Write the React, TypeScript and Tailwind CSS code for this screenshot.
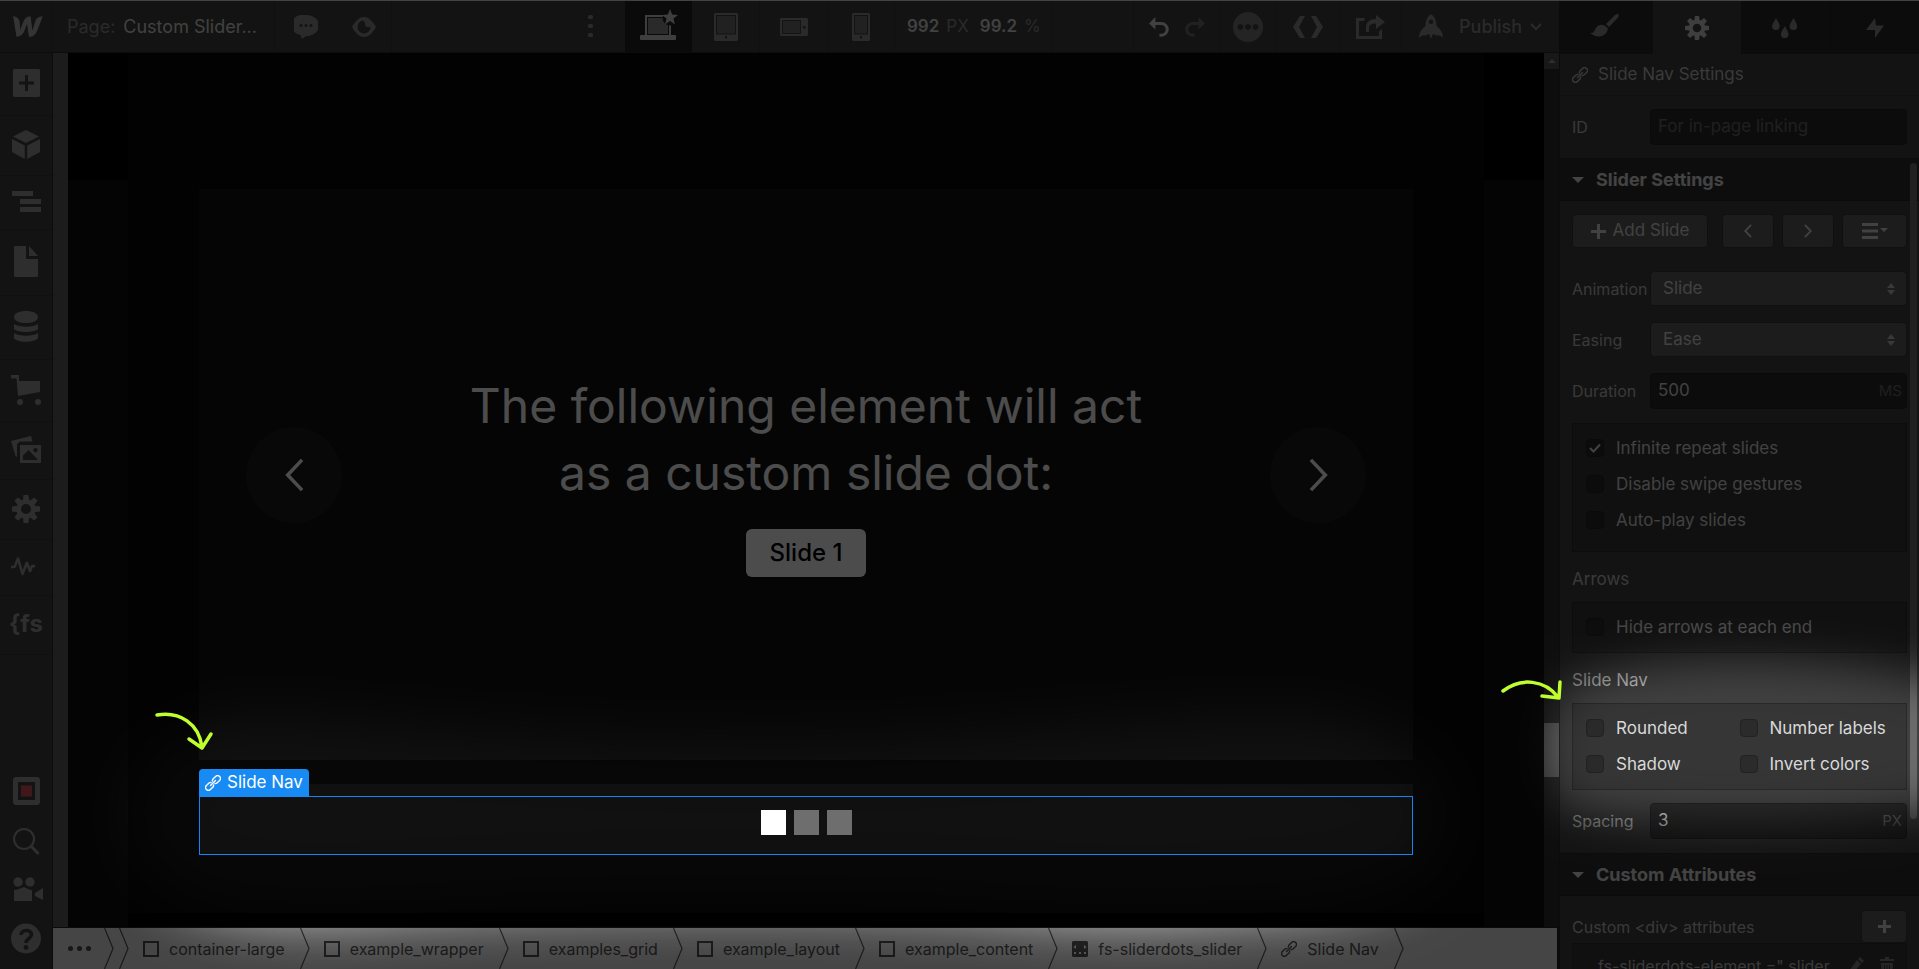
import { useState } from "react";
import type { InputHTMLAttributes, ReactNode } from "react";

const ANIMATIONS = ["Slide", "Cross Fade", "Fade Out/In", "Slide Out/In"];
const EASINGS = ["Ease", "Linear", "Ease In", "Ease Out"];

const BREADCRUMBS = [
  { label: "container-large", icon: "box" },
  { label: "example_wrapper", icon: "box" },
  { label: "examples_grid", icon: "box" },
  { label: "example_layout", icon: "box" },
  { label: "example_content", icon: "box" },
  { label: "fs-sliderdots_slider", icon: "slider" },
  { label: "Slide Nav", icon: "link" },
];

/* ---------- icons ---------- */

interface IconProps {
  w: number;
  h: number;
  box?: string;
  className?: string;
  children: ReactNode;
}

function Icon({ w, h, box, className = "", children }: IconProps) {
  return (
    <svg
      width={w}
      height={h}
      viewBox={box ?? `0 0 ${w} ${h}`}
      fill="currentColor"
      aria-hidden="true"
      className={`shrink-0 ${className}`}
    >
      {children}
    </svg>
  );
}

function GearIcon({ size }: { size: number }) {
  return (
    <Icon w={size} h={size} box="0 0 28 28">
      {[0, 45, 90, 135].map((deg) => (
        <path key={deg} d="M11.6 0h4.800l.800 6v16l-.800 6h-4.800l-.800-6V6z" transform={`rotate(${deg} 14 14)`} />
      ))}
      <circle cx="14" cy="14" r="7.3" fill="none" stroke="currentColor" strokeWidth="4.6" />
      <circle cx="14" cy="14" r="5" className="fill-[#404040]" />
    </Icon>
  );
}

function LinkIcon({ size = 16 }: { size?: number }) {
  return (
    <Icon w={size} h={size} box="0 0 16 16">
      <g fill="none" stroke="currentColor" strokeWidth="1.4" strokeLinecap="round" transform="rotate(-45 8 8)">
        <path d="M7 9.800A2.800 2.800 0 0 1 5.500 10.800H1.500a2.800 2.800 0 0 1 0-5.600h4A2.800 2.800 0 0 1 7 6.200" />
        <path d="M9 6.200a2.800 2.800 0 0 1 1.500-1h4a2.800 2.800 0 0 1 0 5.600h-4A2.800 2.800 0 0 1 9 9.800" />
        <path d="M4.500 8h7" />
      </g>
    </Icon>
  );
}

function ChevronIcon({ dir, w, h, stroke }: { dir: "left" | "right"; w: number; h: number; stroke: number }) {
  return (
    <Icon w={w} h={h} box="0 0 10 18">
      <path
        d={dir === "left" ? "M9 1L1.4 9 9 17" : "M1 1l7.6 8L1 17"}
        fill="none"
        stroke="currentColor"
        strokeWidth={stroke}
      />
    </Icon>
  );
}

function UndoIcon({ flip = false }: { flip?: boolean }) {
  return (
    <Icon w={20} h={20}>
      <g transform={flip ? "matrix(-1 0 0 1 20 0)" : undefined}>
        <path d="M0 6.6L6.4 0v12.6z" />
        <path d="M5 6.6h7.4a5.6 5.6 0 0 1 0 11.6h-2" fill="none" stroke="currentColor" strokeWidth="3" />
      </g>
    </Icon>
  );
}

const SIDEBAR = [
  {
    name: "Add elements",
    height: "h-[63px]",
    icon: (
      <Icon w={27} h={28}>
        <path fillRule="evenodd" d="M1 0h25l1 1v26l-1 1H1l-1-1V1zM12 6v6.500H6v3h6V22h3v-6.500h6v-3h-6V6z" />
      </Icon>
    ),
  },
  {
    name: "Symbols",
    height: "h-[60px]",
    icon: (
      <Icon w={28} h={29}>
        <path d="M14 0l13 6.500L14 13 1 6.500zM0 9l12.800 6.500V29L0 22zM28 9l-12.800 6.500V29L28 22z" />
      </Icon>
    ),
  },
  {
    name: "Navigator",
    height: "h-[54px]",
    icon: (
      <Icon w={29} h={21}>
        <path d="M0 0h21v5H0zM8 8h21v5H8zM8 16h21v5H8z" />
      </Icon>
    ),
  },
  {
    name: "Pages",
    height: "h-[66px]",
    icon: (
      <Icon w={24} h={31}>
        <path d="M0 1l1-1h11v13h12v17l-1 1H1l-1-1zM15 0l9 10h-9z" />
      </Icon>
    ),
  },
  {
    name: "CMS collections",
    height: "h-[64px]",
    icon: (
      <Icon w={24} h={31}>
        <path d="M0 6c0-8 24-8 24 0s-24 8-24 0zM0 13c5 3.500 19 3.500 24 0v5c-3 4-21 4-24 0zM0 22c5 3.500 19 3.500 24 0v5c-3 5-21 5-24 0z" />
      </Icon>
    ),
  },
  {
    name: "Ecommerce",
    height: "h-[62px]",
    icon: (
      <Icon w={30} h={30}>
        <path d="M0 0h8v6h21v11L7 21 5.500 3.500H0z" />
        <circle cx="9" cy="27" r="3" />
        <circle cx="27" cy="27" r="3" />
      </Icon>
    ),
  },
  {
    name: "Assets",
    height: "h-[58px]",
    icon: (
      <Icon w={30} h={27}>
        <path d="M0 5L20 0l1.500 5.500H9L6 8v13L4.500 20z" />
        <path fillRule="evenodd" d="M9 9h21v18H9zM12 24h15l-9.500-10L12 19.500zM24.500 12a2.200 2.200 0 1 0 .01 0z" />
      </Icon>
    ),
  },
  { name: "Settings", height: "h-[60px]", icon: <GearIcon size={28} /> },
  {
    name: "Audit",
    height: "h-[56px]",
    icon: (
      <Icon w={24} h={20} className="mr-1.5">
        <path
          d="M0 10h3.500L7 1.500 11.500 17l4.300-11 3.200 8 2-5h3"
          fill="none"
          stroke="currentColor"
          strokeWidth="2.600"
          strokeLinejoin="round"
        />
      </Icon>
    ),
  },
  { name: "Finsweet extension", height: "h-[59px]", icon: <span className="text-[24px] leading-6 font-bold">{"{fs"}</span> },
];

/* ---------- top bar ---------- */

function TopButton({ name, className, children }: { name: string; className: string; children: ReactNode }) {
  return (
    <button type="button" aria-label={name} className={`flex h-full items-center justify-center ${className}`}>
      {children}
    </button>
  );
}

function TopBar() {
  return (
    <header className="flex h-[52px] shrink-0 items-center border-b border-[#2b2b2b] bg-[#404040] text-[#8c8c8c]">
      <TopButton name="Webflow menu" className="w-[53px] border-r border-[#363636] pl-1 text-[#b0b0b0]">
        <Icon w={30} h={21} box="3.9 6.3 18.2 12.8">
          <path d="M17.8 8.560s-1.950 6.100-2.100 6.600c-.060-.500-1.120-8.770-1.120-8.770-2.450 0-3.760 1.750-4.460 3.590 0 0-1.770 4.570-1.910 4.960-.010-.360-.280-4.920-.280-4.920-.150-2.320-2.280-3.630-4.010-3.630l2.070 12.590c2.640-.010 4.070-1.790 4.810-3.640 0 0 1.580-4.100 1.650-4.280.010.170 1.140 7.920 1.140 7.920 2.650 0 4.080-1.670 4.850-3.450l3.590-9.140c-2.630 0-4.010 1.790-4.230 2.170z" />
        </Icon>
      </TopButton>
      <button type="button" className="flex h-full w-[222px] items-center gap-2 border-r border-[#363636] pl-3.5 text-[18px] whitespace-nowrap">
        <span>Page:</span>
        <span className="text-[#d9d9d9]">Custom Slider...</span>
      </button>
      <TopButton name="Comments" className="w-[62px]">
        <Icon w={24} h={24}>
          <path
            fillRule="evenodd"
            d="M12 0a12 9.500 0 0 1 0 21L8 24l-1.500-4A12 10 0 0 1 12 0zM7 9a1.500 1.500 0 1 0 .01 0zM12 9a1.500 1.500 0 1 0 .01 0zM17 9a1.500 1.500 0 1 0 .01 0z"
          />
        </Icon>
      </TopButton>
      <TopButton name="Preview" className="w-[55px] border-r border-[#363636]">
        <Icon w={24} h={20}>
          <path
            fillRule="evenodd"
            d="M0 10c4-7 8-10 12-10s8 3 12 10c-4 7-8 10-12 10S4 17 0 10zM11 3.500a6.500 6.500 0 1 0 7.500 6c-2 1.500-6 .500-5.500-3 0-1.200-.800-2-2-3z"
          />
        </Icon>
      </TopButton>
      <div className="flex-1" />
      <TopButton name="More breakpoints" className="w-[68px]">
        <Icon w={6} h={24}>
          <rect width="5" height="4" rx="1.500" />
          <rect y="9" width="5" height="4" rx="1.500" />
          <rect y="18" width="5" height="4" rx="1.500" />
        </Icon>
      </TopButton>
      <TopButton name="Desktop" className="w-[67px] bg-[#222222] text-[#d0d0d0]">
        <Icon w={38} h={32} className="mb-1">
          <path d="M5 6h18v2H7v18h22V15h2v13H5z" />
          <rect x="8" y="9" width="20" height="16" className="fill-[#8c8c8c]" />
          <rect y="26" width="36" height="5" rx="1" />
          <circle cx="30" cy="9" r="7.500" className="fill-[#222222]" />
          <path d="M30 0l2.100 5.600 5.900.300-4.600 3.700 1.600 5.800-5-3.300-5 3.300 1.600-5.800L22 5.900l5.900-.300z" />
        </Icon>
      </TopButton>
      <TopButton name="Tablet" className="w-[68px] border-r border-[#363636]">
        <Icon w={24} h={28}>
          <path fillRule="evenodd" d="M1 0h22l1 1v26l-1 1H1l-1-1V1zM2 2v19.500h20V2zM11 23v2.500h2V23z" />
          <rect x="3" y="3" width="18" height="17.500" className="fill-[#6e6e6e]" />
        </Icon>
      </TopButton>
      <TopButton name="Mobile landscape" className="w-[68px] border-r border-[#363636]">
        <Icon w={28} h={18}>
          <path fillRule="evenodd" d="M1 0h26l1 1v16l-1 1H1l-1-1V1zM2 2v14h19V2zM23 8v2.500h2.500V8z" />
          <rect x="3" y="3" width="17" height="12" className="fill-[#6e6e6e]" />
        </Icon>
      </TopButton>
      <TopButton name="Mobile portrait" className="w-[67px] border-r border-[#363636]">
        <Icon w={18} h={28}>
          <path fillRule="evenodd" d="M1 0h16l1 1v26l-1 1H1l-1-1V1zM2 2v19.500h14V2zM8 23v2.500h2V23z" />
          <rect x="3" y="3" width="12" height="17.500" className="fill-[#6e6e6e]" />
        </Icon>
      </TopButton>
      <button type="button" className="flex h-full w-[158px] items-center gap-[7px] border-r border-[#363636] pl-3 text-[17px]">
        <span className="font-semibold text-[#d9d9d9]">992</span>
        <span>PX</span>
        <span className="ml-1 font-semibold text-[#d9d9d9]">99.2</span>
        <span>%</span>
      </button>
      <div className="h-full w-[81px] border-r border-[#363636]" />
      <TopButton name="Undo" className="w-[49px] text-[#d9d9d9]">
        <UndoIcon />
      </TopButton>
      <TopButton name="Redo" className="w-[37px] border-r border-[#363636] pr-3 text-[#6e6e6e]">
        <UndoIcon flip />
      </TopButton>
      <TopButton name="Status" className="w-[56px] border-r border-[#363636] text-[#7a7a7a]">
        <Icon w={30} h={30}>
          <path
            fillRule="evenodd"
            d="M15 0a15 15 0 1 0 .01 0zM7.500 12a3 3 0 1 1-.01 0zM15 12a3 3 0 1 1-.01 0zM22.500 12a3 3 0 1 1-.01 0z"
          />
        </Icon>
      </TopButton>
      <TopButton name="Export code" className="w-16 border-r border-[#363636]">
        <Icon w={30} h={22}>
          <path d="M7 0h5L6 11l6 11H7L0 11zM23 0h-5l6 11-6 11h5l7-11z" />
        </Icon>
      </TopButton>
      <TopButton name="Share" className="w-[62px] border-r border-[#363636]">
        <Icon w={29} h={24}>
          <path d="M9 3H0v21h26V14l-3 2.500V21H3V6h5z" />
          <path d="M10 17v-5c0-5 4-8 10-8V0l9 7-9 7V8.500c-5 0-7 1.500-7 4.500v4z" />
        </Icon>
      </TopButton>
      <button type="button" className="flex h-full w-[157px] items-center pl-[17px] text-[18px] font-medium">
        <Icon w={24} h={25}>
          <path
            fillRule="evenodd"
            d="M12 0c4 3 5.500 7 5.500 12 3.500 3 6.500 6 6.500 12-2-2-4-3-6.500-2.500L14 20l-2 5-2-5-3.500 1.500C4 21 2 22 0 24c0-6 3-9 6.500-12C6.500 7 8 3 12 0zM12 5.500a2.300 2.300 0 1 0 .01 0z"
          />
        </Icon>
        <span className="ml-4">Publish</span>
        <Icon w={12} h={8} className="ml-2">
          <path d="M1 1l5 5 5-5" fill="none" stroke="currentColor" strokeWidth="2" />
        </Icon>
      </button>
    </header>
  );
}

/* ---------- left sidebar ---------- */

function Sidebar() {
  return (
    <nav className="flex w-[53px] shrink-0 flex-col border-r border-[#2b2b2b] bg-[#404040] text-[#999999]">
      {SIDEBAR.map((item) => (
        <button
          key={item.name}
          type="button"
          aria-label={item.name}
          className={`flex w-full shrink-0 items-center justify-center border-b border-[#363636] pb-0.5 ${item.height}`}
        >
          {item.icon}
        </button>
      ))}
      <div className="mt-auto flex flex-col items-center gap-[22px] pb-[15px]">
        <button type="button" aria-label="Record">
          <Icon w={27} h={28}>
            <path fillRule="evenodd" d="M2 0h23l2 2v24l-2 2H2l-2-2V2zM5 5v18h17V5z" />
            <rect x="8" y="8.500" width="11" height="11" className="fill-[#d8505f]" />
          </Icon>
        </button>
        <button type="button" aria-label="Search">
          <Icon w={27} h={28}>
            <circle cx="11" cy="12" r="10" fill="none" stroke="currentColor" strokeWidth="2.200" />
            <path d="M18 19l7.500 8" stroke="currentColor" strokeWidth="3" />
          </Icon>
        </button>
        <button type="button" aria-label="Video tutorials" className="pl-1">
          <Icon w={30} h={24}>
            <circle cx="5" cy="5" r="4.700" />
            <circle cx="17" cy="5" r="4.700" />
            <path d="M1 13c4 0 6-2 10-3 3 1 5 3 8 3v11H1zM22 16l8-5v12l-8-4z" />
          </Icon>
        </button>
        <button type="button" aria-label="Help">
          <Icon w={30} h={31}>
            <circle cx="15" cy="15.500" r="15" />
            <path d="M10 12c0-6 10.500-6 10.500-.500 0 4-5.500 4-5.500 8.500" fill="none" stroke="#404040" strokeWidth="3.600" />
            <circle cx="15" cy="24.500" r="2.400" fill="#404040" />
          </Icon>
        </button>
      </div>
    </nav>
  );
}

/* ---------- canvas ---------- */

function SlideArrow({ dir }: { dir: "left" | "right" }) {
  return (
    <button
      type="button"
      aria-label={dir === "left" ? "Previous slide" : "Next slide"}
      className="flex size-24 shrink-0 items-center justify-center rounded-full bg-[#1c1c1c] text-white"
    >
      <ChevronIcon dir={dir} w={19} h={34} stroke={1.900} />
    </button>
  );
}

function Canvas() {
  return (
    <div className="flex min-h-0 flex-1">
      <div className="w-[15px] shrink-0 bg-[#5e5e5e]" />
      <div className="flex min-w-0 flex-1 bg-black">
        <div className="mt-[127px] w-[60px] shrink-0 bg-[#0e0e0e]" />
        <main className="mb-3.5 flex min-w-0 flex-1 flex-col bg-[#080808] px-[71px] pt-[136px] pb-[58px]">
          <section className="flex flex-1 items-center justify-between bg-[#111111] px-[47px] text-white">
            <SlideArrow dir="left" />
            <div className="flex flex-col items-center">
              <h1 className="text-center text-[48px] leading-[67px]">
                The following element will act
                <br />
                as a custom slide dot:
              </h1>
              <span className="mt-[23px] rounded-md bg-white px-6 text-[24px] leading-[48px] font-medium text-black">Slide 1</span>
            </div>
            <SlideArrow dir="right" />
          </section>
          <div className="mt-6 bg-[#111111] pt-3">
            {/* selected element, stays above the dimming layer */}
            <div className="relative z-20 flex h-[59px] items-center justify-center gap-2 border border-[#1485f5] pb-1.5">
              <span className="absolute -top-7 -left-px flex h-7 items-center gap-1.5 rounded-t-sm bg-[#188af3] px-1.5 text-[17px] whitespace-nowrap text-white">
                <LinkIcon />
                Slide Nav
              </span>
              <button type="button" aria-label="Slide 1" className="size-[25px] bg-white" />
              <button type="button" aria-label="Slide 2" className="size-[25px] bg-[#6e6e6e]" />
              <button type="button" aria-label="Slide 3" className="size-[25px] bg-[#6e6e6e]" />
            </div>
          </div>
        </main>
        <div className="mt-[127px] w-[60px] shrink-0 bg-[#0e0e0e]" />
      </div>
      <div className="flex w-[15px] shrink-0 flex-col bg-[#2e2e2e]">
        <div className="flex h-4 items-center justify-center bg-[#525252] text-[#999999]">
          <Icon w={8} h={4}>
            <path d="M4 0l4 4H0z" />
          </Icon>
        </div>
        <div className="mt-[654px] h-[54px] bg-[#666666]" />
      </div>
    </div>
  );
}

function CrumbIcon({ kind }: { kind: string }) {
  if (kind === "link") return <LinkIcon />;
  if (kind === "slider") {
    return (
      <Icon w={16} h={16}>
        <path
          fillRule="evenodd"
          d="M1 0h14l1 1v14l-1 1H1l-1-1V1zM4 4L1.500 6 4 8zM12 4v4l2.500-2zM2 11v2h2v-2zM7 11v2h2v-2zM12 11v2h2v-2z"
        />
      </Icon>
    );
  }
  return <span className="size-4 border-2 border-current" />;
}

function CrumbDivider() {
  return (
    <Icon w={10} h={41}>
      <path d="M.500 0l8.500 20.500L.500 41" fill="none" stroke="#555555" strokeWidth="1.200" />
    </Icon>
  );
}

function Breadcrumbs() {
  return (
    <nav className="mr-0.5 flex h-[42px] shrink-0 items-center overflow-hidden border-t border-[#222222] bg-[#e6e6e6] text-[16px] text-[#4d4d4d]">
      <button type="button" aria-label="Parent elements" className="flex h-full w-[51px] shrink-0 items-center pl-[15px]">
        <Icon w={23} h={5}>
          <circle cx="2.500" cy="2.500" r="2.500" />
          <circle cx="11.500" cy="2.500" r="2.500" />
          <circle cx="20.500" cy="2.500" r="2.500" />
        </Icon>
      </button>
      <CrumbDivider />
      <span className="w-[5px]" />
      <CrumbDivider />
      {BREADCRUMBS.map((crumb) => (
        <div key={crumb.label} className="flex items-center">
          <a href={`#${crumb.label}`} className="flex items-center gap-2.5 pr-[15px] pl-3.5 whitespace-nowrap">
            <CrumbIcon kind={crumb.icon} />
            {crumb.label}
          </a>
          <CrumbDivider />
        </div>
      ))}
    </nav>
  );
}

/* ---------- settings panel ---------- */

function SectionHeader({ title }: { title: string }) {
  return (
    <h2 className="flex h-[43px] shrink-0 items-center gap-3 border-y border-[#262626] bg-[#2e2e2e] pl-3 text-[18px] font-bold text-[#e0e0e0]">
      <Icon w={12} h={6}>
        <path d="M0 0h12L6 6z" />
      </Icon>
      {title}
    </h2>
  );
}

function Row({ id, label, children }: { id: string; label: string; children: ReactNode }) {
  return (
    <div className="flex items-center">
      <label htmlFor={id} className="w-[78px] shrink-0 text-[16px] text-[#bfbfbf]">
        {label}
      </label>
      {children}
    </div>
  );
}

function TextField({ unit, ...props }: InputHTMLAttributes<HTMLInputElement> & { unit?: string }) {
  return (
    <div className="flex h-9 min-w-0 flex-1 items-center rounded border border-[#222222] bg-[#2b2b2b] pr-1 pl-[7px]">
      <input
        {...props}
        className="min-w-0 flex-1 bg-transparent text-[17px] text-[#d9d9d9] outline-none placeholder:text-[#696969]"
      />
      {unit && <span className="text-[15px] text-[#666666]">{unit}</span>}
    </div>
  );
}

function SelectField({ id, options }: { id: string; options: string[] }) {
  return (
    <div className="relative h-[35px] min-w-0 flex-1 text-[#bfbfbf]">
      <select
        id={id}
        className="size-full appearance-none rounded-sm border border-[#363636] bg-[#5e5e5e] pl-3 text-[17px] text-[#d9d9d9] outline-none"
      >
        {options.map((option) => (
          <option key={option}>{option}</option>
        ))}
      </select>
      <Icon w={8} h={12} className="pointer-events-none absolute top-3 right-3">
        <path d="M4 0l4 5H0zM4 12l4-5H0z" />
      </Icon>
    </div>
  );
}

function Check({ label, on = false }: { label: string; on?: boolean }) {
  const [checked, setChecked] = useState(on);
  return (
    <label className="flex h-[18px] items-center gap-3 text-[17px] leading-[18px] whitespace-nowrap text-[#d9d9d9]">
      <span className="relative flex size-[18px] shrink-0">
        <input
          type="checkbox"
          checked={checked}
          onChange={() => setChecked(!checked)}
          className="size-full appearance-none rounded-sm border border-[#222222] bg-[#2b2b2b]"
        />
        {checked && (
          <Icon w={12} h={10} className="pointer-events-none absolute top-1 left-[3px]">
            <path d="M1 5l3.500 3.500L11 1.500" fill="none" stroke="currentColor" strokeWidth="2" />
          </Icon>
        )}
      </span>
      {label}
    </label>
  );
}

function PanelButton({ name, className, children }: { name: string; className: string; children: ReactNode }) {
  return (
    <button
      type="button"
      aria-label={name}
      className={`flex items-center justify-center rounded-sm border border-[#363636] bg-[#5e5e5e] text-[#d9d9d9] ${className}`}
    >
      {children}
    </button>
  );
}

const GROUP = "border border-[#2a2a2a] bg-[#363636] px-[13px] pt-[15px]";
const GROUP_TITLE = "flex h-[50px] items-center pt-1.5 text-[17px] text-[#bfbfbf]";
const TAB = "flex flex-1 items-center justify-center";

function SettingsPanel() {
  return (
    <aside className="relative flex w-[360px] shrink-0 flex-col overflow-hidden border-l border-[#262626] bg-[#404040]">
      <div className="flex h-[53px] shrink-0">
        <button type="button" aria-label="Style" className={`${TAB} bg-[#2b2b2b] pr-1 text-[#8c8c8c]`}>
          <Icon w={29} h={24} className="mb-1">
            <path d="M27 0c2 0 2 2 1 3.500L19 13l-3-3L25 1zM14.500 11.500l3.500 3c-1 6-8 12-18 4.500 4 .500 4-2 6-5 2-3 6-4 8.500-2.500z" />
          </Icon>
        </button>
        <button type="button" aria-label="Settings" className={`${TAB} bg-[#404040] text-[#d0d0d0]`}>
          <GearIcon size={24} />
        </button>
        <button type="button" aria-label="Style manager" className={`${TAB} border-r border-[#222222] bg-[#2b2b2b] text-[#8c8c8c]`}>
          <Icon w={26} h={20}>
            <path d="M4 0c2 4 3.700 6 3.700 8.300a3.800 3.800 0 0 1-7.600 0C.100 6 2 4 4 0zM21.500 0c2 4 3.700 6 3.700 8.300a3.800 3.800 0 0 1-7.600 0C17.600 6 19.500 4 21.500 0zM12.800 8c2 4 3.700 6 3.700 8.300a3.800 3.800 0 0 1-7.600 0C8.900 14 10.800 12 12.800 8z" />
          </Icon>
        </button>
        <button type="button" aria-label="Interactions" className={`${TAB} bg-[#2b2b2b] text-[#8c8c8c]`}>
          <Icon w={18} h={20}>
            <path d="M9 0l1 7.500h8L9 20V12H0z" />
          </Icon>
        </button>
      </div>
      <div className="flex h-[42px] shrink-0 items-center gap-2.5 border-b border-[#383838] pl-3 text-[17px] text-[#bfbfbf]">
        <LinkIcon />
        Slide Nav Settings
      </div>
      <div className="px-3 pt-[13px] pb-[13px]">
        <Row id="element-id" label="ID">
          <TextField id="element-id" placeholder="For in-page linking" />
        </Row>
      </div>
      <SectionHeader title="Slider Settings" />
      <div className="shrink-0 px-3 pt-[13px] pb-3.5">
        <div className="flex h-[34px]">
          <PanelButton name="Add Slide" className="mr-3.5 flex-1 gap-[7px] text-[17px]">
            <Icon w={15} h={15}>
              <path d="M6 0h3v6h6v3H9v6H6V9H0V6h6z" />
            </Icon>
            Add Slide
          </PanelButton>
          <PanelButton name="Previous" className="mr-2 w-[52px]">
            <ChevronIcon dir="left" w={8} h={14} stroke={2.400} />
          </PanelButton>
          <PanelButton name="Next" className="mr-2 w-[52px]">
            <ChevronIcon dir="right" w={8} h={14} stroke={2.400} />
          </PanelButton>
          <PanelButton name="Slide list" className="w-[65px]">
            <Icon w={26} h={16}>
              <path d="M0 0h16v3H0zM0 6.500h16v3H0zM0 13h16v3H0zM18 5h8l-4 4z" />
            </Icon>
          </PanelButton>
        </div>
        <div className="mt-[23px] flex flex-col gap-4">
          <Row id="animation" label="Animation">
            <SelectField id="animation" options={ANIMATIONS} />
          </Row>
          <Row id="easing" label="Easing">
            <SelectField id="easing" options={EASINGS} />
          </Row>
          <Row id="duration" label="Duration">
            <TextField id="duration" defaultValue="500" unit="MS" />
          </Row>
        </div>
        <div className={`mt-3.5 flex flex-col gap-[18px] pb-[22px] ${GROUP}`}>
          <Check label="Infinite repeat slides" on />
          <Check label="Disable swipe gestures" />
          <Check label="Auto-play slides" />
        </div>
        <h3 className={GROUP_TITLE}>Arrows</h3>
        <div className={`pb-4 ${GROUP}`}>
          <Check label="Hide arrows at each end" />
        </div>
        <h3 className={GROUP_TITLE}>Slide Nav</h3>
        <div className={`grid grid-cols-2 gap-y-[18px] pb-4 ${GROUP}`}>
          <Check label="Rounded" />
          <Check label="Number labels" />
          <Check label="Shadow" />
          <Check label="Invert colors" />
        </div>
        <div className="mt-[13px]">
          <Row id="spacing" label="Spacing">
            <TextField id="spacing" defaultValue="3" unit="PX" />
          </Row>
        </div>
      </div>
      <SectionHeader title="Custom Attributes" />
      <div className="shrink-0 px-3 pt-3.5">
        <div className="flex items-center justify-between">
          <span className="text-[16px] text-[#bfbfbf]">Custom &lt;div&gt; attributes</span>
          <PanelButton name="Add attribute" className="h-[33px] w-[46px]">
            <Icon w={13} h={13}>
              <path d="M5 0h3v5h5v3H8v5H5V8H0V5h5z" />
            </Icon>
          </PanelButton>
        </div>
        <div className="flex h-[46px] items-center border border-[#2e2e2e] bg-[#383838] pr-3 pl-[25px] text-[16px] text-[#bfbfbf]">
          <span className="flex-1 whitespace-nowrap">fs-sliderdots-element =&quot; slider</span>
          <button type="button" aria-label="Edit attribute" className="mr-4 text-[#808080]">
            <Icon w={14} h={18}>
              <path d="M10 0l4 4-2 2-4-4zM7 3l4 4-7 8-4 2 .500-5z" />
            </Icon>
          </button>
          <button type="button" aria-label="Delete attribute" className="text-[#808080]">
            <Icon w={14} h={18}>
              <path fillRule="evenodd" d="M5 0h4v2h5v2H0V2h5zM1 6h12l-1 12H2zM4 8v8h1V8zM6.500 8v8h1V8zM9 8v8h1V8z" />
            </Icon>
          </button>
        </div>
      </div>
      <div className="absolute top-[162px] right-0.5 h-[656px] w-[7px] rounded-full bg-[#6b6b6b]" />
    </aside>
  );
}

/* ---------- highlight layer ---------- */

function Spotlight() {
  return (
    <svg className="pointer-events-none absolute inset-0 z-10 size-full" aria-hidden="true">
      <defs>
        <filter id="soft" filterUnits="userSpaceOnUse" x="0" y="500" width="2100" height="600">
          <feGaussianBlur stdDeviation="30" />
        </filter>
        <filter id="soft-small" filterUnits="userSpaceOnUse" x="1300" y="500" width="800" height="600">
          <feGaussianBlur stdDeviation="22" />
        </filter>
        <mask id="holes" maskUnits="userSpaceOnUse" x="0" y="0" width="4000" height="3000">
          <rect width="4000" height="3000" fill="white" />
          <path
            d="M130 805C140 735 210 705 300 716C520 735 640 742 800 742C960 738 1100 720 1260 714C1370 712 1445 750 1450 810C1450 880 1380 905 1260 908C1120 922 1060 912 960 905C760 895 560 900 420 908C300 920 120 925 130 805Z"
            fill="black"
            filter="url(#soft)"
          />
          <path d="M1560 690C1620 648 1850 648 1970 690V800C1850 828 1640 828 1560 805C1542 780 1542 710 1560 690Z" fill="black" filter="url(#soft-small)" />
        </mask>
      </defs>
      <rect width="100%" height="100%" fill="black" fillOpacity="0.700" mask="url(#holes)" />
      <g fill="none" stroke="#bfff2e" strokeWidth="3.500" strokeLinecap="round" strokeLinejoin="round">
        <path d="M157 714C180 710 199 723 202 746M189 738l13 9 9-14" />
        <path d="M1503 690C1521 676 1545 679 1558 696M1542 695l17 2 1-16" />
      </g>
    </svg>
  );
}

export default function App() {
  return (
    <div className="relative flex h-screen overflow-hidden border-t border-[#434343] bg-black font-['Inter','Liberation_Sans',sans-serif]">
      <div className="flex min-w-0 flex-1 flex-col">
        <TopBar />
        <div className="flex min-h-0 flex-1">
          <Sidebar />
          <div className="flex min-w-0 flex-1 flex-col bg-[#262626]">
            <Canvas />
            <Breadcrumbs />
          </div>
        </div>
      </div>
      <SettingsPanel />
      <Spotlight />
    </div>
  );
}
